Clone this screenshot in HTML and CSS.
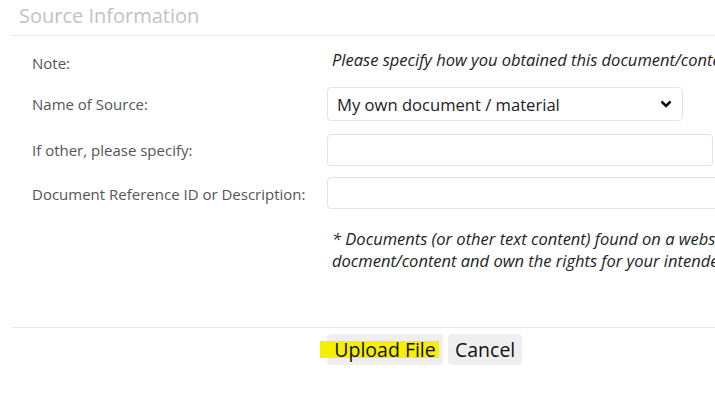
FILE: index.html
```html
<!DOCTYPE html>
<html>
<head>
<meta charset="utf-8">
<link rel="stylesheet" href="styles.css">
</head>
<body>
<div class="panel">
  <h2 class="title">Source Information</h2>
  <div class="form">
    <div class="label note-label">Note:</div>
    <div class="value note">Please specify how you obtained this document/content and confirm that you own the rights.</div>

    <div class="label">Name of Source:</div>
    <div class="value">
      <div class="select-wrap">
        <select class="select">
          <option>My own document / material</option>
        </select>
        <svg class="chev" width="12" height="8" viewBox="0 0 12 8"><path d="M1.5 1.5 L6 6 L10.5 1.5" fill="none" stroke="#111" stroke-width="2.6"/></svg>
      </div>
    </div>

    <div class="label">If other, please specify:</div>
    <div class="value"><input class="input input-a" type="text"></div>

    <div class="label">Document Reference ID or Description:</div>
    <div class="value"><input class="input input-b" type="text"></div>

    <div class="label"></div>
    <div class="value footnote">* Documents (or other text content) found on a website must be properly licensed. Please confirm you have permission to use this<br>docment/content and own the rights for your intended use.</div>
  </div>
  <div class="footer">
    <div class="buttons">
      <button class="btn btn-upload"><span class="mark"></span><span class="btn-text">Upload File</span></button>
      <button class="btn">Cancel</button>
    </div>
  </div>
</div>
</body>
</html>
```

FILE: styles.css
```css
html, body {
  margin: 0;
  padding: 0;
  background: #fff;
  overflow: hidden;
}
body {
  font-family: "Open Sans", "Liberation Sans", sans-serif;
  width: 715px;
  height: 411px;
}
.panel {
  margin-left: 12px;
  width: 1100px;
}
.title {
  margin: 0;
  font-size: 20px;
  font-weight: 400;
  color: #c2c2c2;
  line-height: 28px;
  padding: 2px 0 5px 7px;
  border-bottom: 1px solid #e6e6e6;
}
.form {
  display: grid;
  grid-template-columns: 295px 1fr;
  padding-left: 20px;
  align-items: center;
  row-gap: 12px;
  padding-top: 14px;
}
.label {
  font-size: 15px;
  color: #555;
  line-height: 22px;
}
.value {
  min-width: 0;
}
.note {
  font-size: 16.5px;
  font-style: italic;
  color: #222;
  white-space: nowrap;
  line-height: 22px;
  padding-left: 5px;
  margin-bottom: 4px;
  margin-top: -1px;
}
.select-wrap {
  position: relative;
  width: 356px;
}
.select {
  -webkit-appearance: none;
  appearance: none;
  width: 356px;
  height: 34px;
  box-sizing: border-box;
  border: 1px solid #e3e3e3;
  border-radius: 4px;
  background: #fff;
  font-family: "Open Sans", "Liberation Sans", sans-serif;
  font-size: 16.6px;
  color: #222;
  padding: 0 0 0 9px;
  outline: none;
}
.chev {
  position: absolute;
  right: 11px;
  top: 13px;
}
.input {
  box-sizing: border-box;
  height: 32px;
  border: 1px solid #e3e3e3;
  border-radius: 4px;
  background: #fff;
  outline: none;
  display: block;
}
.input-a {
  width: 386px;
  margin-top: 1px;
}
.input-b {
  width: 600px;
  margin-top: -1px;
}
.footnote {
  font-size: 16.5px;
  font-style: italic;
  color: #222;
  line-height: 22px;
  white-space: nowrap;
  padding-left: 5px;
  margin-top: 7px;
}
.footer {
  margin-top: 55px;
  border-top: 1px solid #e6e6e6;
  padding: 6px 0 0 315px;
}
.buttons {
  display: flex;
  gap: 5px;
}
.btn {
  position: relative;
  font-family: "Open Sans", "Liberation Sans", sans-serif;
  font-size: 19.5px;
  color: #111;
  background: #efefef;
  border: none;
  border-radius: 4px;
  height: 31px;
  padding: 0 7px;
  line-height: 31px;
}
.btn-upload {
  width: 116px;
}
.btn-text {
  position: relative;
}
.mark {
  position: absolute;
  left: -7px;
  top: 7px;
  width: 119px;
  height: 17px;
  background: #f4f000;
}
```
